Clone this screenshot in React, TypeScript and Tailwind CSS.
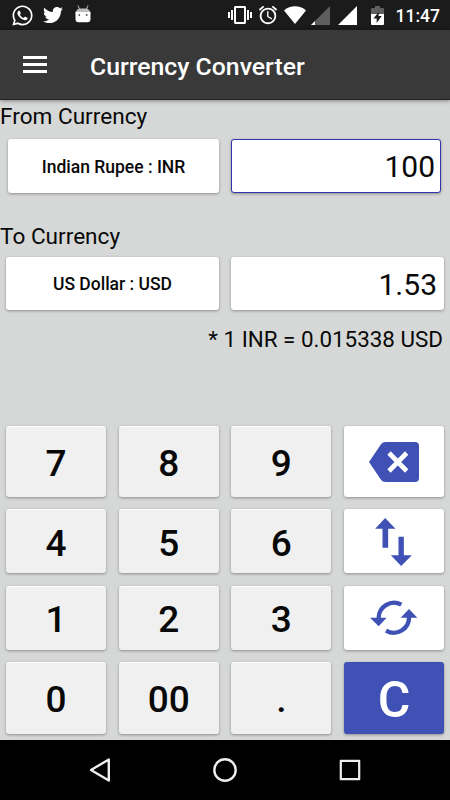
import { useState } from "react";
import { FaTwitter, FaWhatsapp } from "react-icons/fa";
import { MdAlarm, MdVibration } from "react-icons/md";

const RATE = 0.015338;

const StatusBar = () => (
  <div className="h-[30px] shrink-0 bg-[#1b1b1b] text-white">
    <div className="flex h-full items-center pl-[11px]">
      <FaWhatsapp className="size-[23px]" />
      <FaTwitter className="ml-[9px] size-5" />
      <svg viewBox="0 0 16 18" className="mb-[3px] ml-3 h-[18px] w-4">
        <path d="M3 0.5 4.5 4M13 0.5 11.5 4" stroke="#bbb" strokeWidth="1" />
        <path d="M0.5 8.5a5 5 0 0 1 5-5h5a5 5 0 0 1 5 5z" fill="#bdbdbd" />
        <path d="M0.5 7h15v7a3.2 3.2 0 0 1-3.2 3.2H3.7A3.2 3.2 0 0 1 .5 14z" fill="#fff" />
        <circle cx="4.3" cy="10" r="0.9" fill="#555" />
        <circle cx="11.7" cy="10" r="0.9" fill="#555" />
      </svg>
      <div className="ml-auto flex items-center pr-[10px]">
        <MdVibration className="size-6" />
        <MdAlarm className="ml-[5px] size-[22px]" />
        <svg viewBox="0 0 22 18" className="ml-[5px] h-[18px] w-[22px]" fill="#fff">
          <path d="M0 4.5C6.5-1.1 15.5-1.1 22 4.5L11 18z" />
        </svg>
        <svg viewBox="0 0 19 19" className="ml-[5px] size-[19px]">
          <path d="M0 19 19 0v19z" fill="#5e5e5e" />
          <path d="M0 19 4 15v4z" fill="#fff" />
        </svg>
        <svg viewBox="0 0 19 19" className="ml-[8px] size-[19px]" fill="#fff">
          <path d="M0 19 19 0v19z" />
        </svg>
        <svg viewBox="0 0 13 19" className="ml-[14px] h-[19px] w-[13px]">
          <path d="M4 0h5v2h3q1 0 1 1v5H0V3q0-1 1-1h3z" fill="#5e5e5e" />
          <path d="M0 8h13v10q0 1-1 1H1q-1 0-1-1z" fill="#fff" />
          <path d="M8 5.5 2.5 12.5h3.2V17l5-7H7.5z" fill="#1b1b1b" />
        </svg>
        <span className="ml-[12px] pt-[3px] text-[17.5px] leading-none font-medium">11:47</span>
      </div>
    </div>
  </div>
);

const BackspaceIcon = () => (
  <svg viewBox="0 0 150 120" className="h-10 w-[50px]">
    <path d="M0 60 36 7Q41 0 49 0H138Q150 0 150 12V108Q150 120 138 120H49Q41 120 36 113Z" fill="#3f51b5" />
    <path d="M60 33 113 87M113 33 60 87" stroke="#fff" strokeWidth="14" />
  </svg>
);

const SwapIcon = () => (
  <svg viewBox="0 0 110 144" className="h-12 w-[37px]" fill="#3f51b5">
    <path d="M30 0 61 32H39V89H22V32H0zM70 56H86V112H110L78 144 47 112H70z" />
  </svg>
);

const RefreshIcon = () => (
  <svg viewBox="0 0 144 108" className="h-9 w-12">
    <g fill="none" stroke="#3f51b5" strokeWidth="13">
      <path d="M26 56A46 46 0 0 1 94 14" />
      <path d="M117 50A46 46 0 0 1 48 92" />
    </g>
    <path d="M0 53H50L26 79zM92 53H142L117 27z" fill="#3f51b5" />
  </svg>
);

const card = "rounded-[3px] shadow-[0_1px_3px_rgba(0,0,0,0.35)]";
const keyClass = `${card} flex items-center justify-center`;

const rows = [
  ["7", "8", "9", "back"],
  ["4", "5", "6", "swap"],
  ["1", "2", "3", "refresh"],
  ["0", "00", ".", "C"],
];

const icons: Record<string, React.ReactNode> = {
  back: <BackspaceIcon />,
  swap: <SwapIcon />,
  refresh: <RefreshIcon />,
};

const App = () => {
  const [amount, setAmount] = useState("100");
  const [swapped, setSwapped] = useState(false);

  const inr = "Indian Rupee : INR";
  const usd = "US Dollar : USD";
  const rate = swapped ? 1 / RATE : RATE;

  const handleKey = (key: string) => {
    if (key === "back") setAmount((a) => a.slice(0, -1));
    else if (key === "C") setAmount("");
    else if (key === "swap") setSwapped((s) => !s);
    else if (key === "." && amount.includes(".")) return;
    else if (key !== "refresh") setAmount((a) => a + key);
  };

  return (
    <div className="flex h-[800px] w-[450px] flex-col overflow-hidden bg-[#d6d8d7] font-['Roboto',sans-serif] text-[#080808]">
      <StatusBar />
      <header className="z-10 flex h-[70px] shrink-0 items-center border-b border-[#222] bg-[#393939] pl-[23px] text-white shadow-[0_1px_4px_rgba(0,0,0,0.4)]">
        <button className="flex w-6 flex-col gap-1">
          <span className="h-[3px] w-full bg-white" />
          <span className="h-[3px] w-full bg-white" />
          <span className="h-[3px] w-full bg-white" />
        </button>
        <h1 className="ml-[43px] pt-[5px] text-[24.8px] font-medium">Currency Converter</h1>
      </header>

      <main className="flex flex-1 flex-col">
        <h2 className="mt-[2px] h-[30px] text-[22.6px] leading-[30px]">From Currency</h2>
        <div className="mt-[7px] flex h-[54px] pr-[9px] pl-[8px]">
          <button className={`${card} w-[211px] bg-white pt-[2px] text-[17.5px] font-medium`}>
            {swapped ? usd : inr}
          </button>
          <div className={`${card} ml-3 flex flex-1 items-center justify-end border border-[#3036ad] bg-white pr-[5px] text-[30px]`}>
            {amount}
          </div>
        </div>

        <h2 className="mt-[29px] h-[30px] text-[22.6px] leading-[30px]">To Currency</h2>
        <div className="mt-[5px] flex h-[53px] px-[6px]">
          <button className={`${card} w-[213px] bg-white pt-[2px] text-[17.5px] font-medium`}>
            {swapped ? inr : usd}
          </button>
          <div className={`${card} ml-3 flex flex-1 items-center justify-end bg-white pt-[2px] pr-[7px] text-[30px]`}>
            {(Number(amount) * rate).toFixed(2)}
          </div>
        </div>
        <p className="mt-[14px] h-[30px] pr-[7px] text-right text-[22.4px] leading-[30px]">
          * 1 {swapped ? "USD" : "INR"} = {rate.toFixed(6)} {swapped ? "INR" : "USD"}
        </p>

        <div className="mt-auto grid grid-cols-4 grid-rows-[71px_64px_64px_71.4px] gap-x-[12.6px] gap-y-[12.5px] px-[6px] pb-[6.2px]">
          {rows.flat().map((key) => {
            if (icons[key])
              return (
                <button key={key} onClick={() => handleKey(key)} className={`${keyClass} bg-white pt-px`}>
                  {icons[key]}
                </button>
              );
            if (key === "C")
              return (
                <button key={key} onClick={() => handleKey(key)} className={`${keyClass} bg-[#3f51b5] pt-[4px] text-[50px] font-medium text-white`}>
                  C
                </button>
              );
            return (
              <button key={key} onClick={() => handleKey(key)} className={`${keyClass} border-t border-white bg-[#f0f0f0] pt-[3px] text-[37px] font-medium`}>
                {key}
              </button>
            );
          })}
        </div>
      </main>

      <nav className="flex h-[60px] shrink-0 items-center justify-between bg-black px-[88px]">
        <svg viewBox="0 0 24 26" className="h-[26px] w-6" fill="none" stroke="#eee" strokeWidth="2.4" strokeLinejoin="round">
          <path d="M3 13 20.8 2.5v21z" />
        </svg>
        <svg viewBox="0 0 26 26" className="size-[26px]" fill="none" stroke="#eee" strokeWidth="2.4">
          <circle cx="13" cy="13" r="10.7" />
        </svg>
        <svg viewBox="0 0 24 24" className="size-6" fill="none" stroke="#eee" strokeWidth="2.2" strokeLinejoin="round">
          <rect x="2.8" y="2.8" width="18.4" height="18.4" />
        </svg>
      </nav>
    </div>
  );
};

export default App;
